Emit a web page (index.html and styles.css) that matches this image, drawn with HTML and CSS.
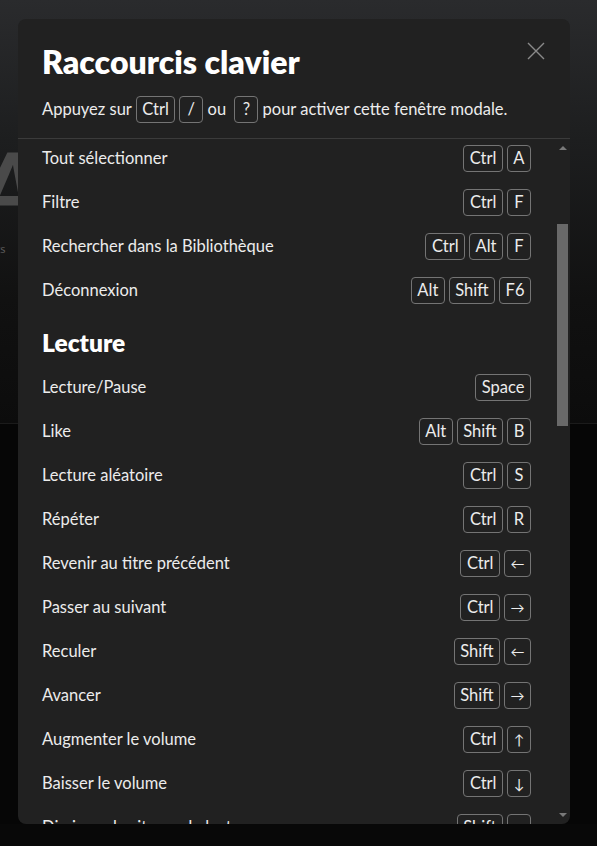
FILE: index.html
```html
<!DOCTYPE html>
<html lang="fr">
<head>
    <meta charset="UTF-8">
    <meta name="viewport" content="width=device-width, initial-scale=1.0">
    <title>Raccourcis clavier</title>
    <link rel="stylesheet" href="styles.css">
</head>
<body>
    <div class="page">
        <div class="pageHeader">
            <div class="bigTitle">Albums</div>
            <div class="subLine">Playlists</div>
        </div>
        <div class="pageBody"></div>
    </div>

    <div class="modal" role="dialog">
        <div class="modalHeader">
            <h1>Raccourcis clavier</h1>
            <p class="hint">Appuyez sur <kbd>Ctrl</kbd><kbd>/</kbd> ou <kbd>?</kbd> pour activer cette fenêtre modale.</p>
            <button class="close" aria-label="Fermer">
                <svg width="18" height="18" viewBox="0 0 18 18"><path d="M1 1 L17 17 M17 1 L1 17" stroke="#8a8a8a" stroke-width="1.4" fill="none"/></svg>
            </button>
        </div>
        <div class="modalBody">
            <div class="scrollView" id="scrollView">
                <h2>Basique</h2>
                <div class="row"><span>Créer une nouvelle playlist</span><span class="keys"><kbd>Ctrl</kbd><kbd>N</kbd></span></div>
                <div class="row"><span>Créer un nouveau dossier</span><span class="keys"><kbd>Ctrl</kbd><kbd>Shift</kbd><kbd>N</kbd></span></div>
                <div class="row"><span>Ouvrir le menu contextuel</span><span class="keys"><kbd>Alt</kbd><kbd>J</kbd></span></div>
                <div class="row"><span>Ouvrir la recherche rapide</span><span class="keys"><kbd>Ctrl</kbd><kbd>K</kbd></span></div>
                <div class="row"><span>Tout sélectionner</span><span class="keys"><kbd>Ctrl</kbd><kbd>A</kbd></span></div>
                <div class="row"><span>Filtre</span><span class="keys"><kbd>Ctrl</kbd><kbd>F</kbd></span></div>
                <div class="row"><span>Rechercher dans la Bibliothèque</span><span class="keys"><kbd>Ctrl</kbd><kbd>Alt</kbd><kbd>F</kbd></span></div>
                <div class="row"><span>Déconnexion</span><span class="keys"><kbd>Alt</kbd><kbd>Shift</kbd><kbd>F6</kbd></span></div>

                <h2>Lecture</h2>
                <div class="row"><span>Lecture/Pause</span><span class="keys"><kbd>Space</kbd></span></div>
                <div class="row"><span>Like</span><span class="keys"><kbd>Alt</kbd><kbd>Shift</kbd><kbd>B</kbd></span></div>
                <div class="row"><span>Lecture aléatoire</span><span class="keys"><kbd>Ctrl</kbd><kbd>S</kbd></span></div>
                <div class="row"><span>Répéter</span><span class="keys"><kbd>Ctrl</kbd><kbd>R</kbd></span></div>
                <div class="row"><span>Revenir au titre précédent</span><span class="keys"><kbd>Ctrl</kbd><kbd class="arrowKey">←</kbd></span></div>
                <div class="row"><span>Passer au suivant</span><span class="keys"><kbd>Ctrl</kbd><kbd class="arrowKey">→</kbd></span></div>
                <div class="row"><span>Reculer</span><span class="keys"><kbd>Shift</kbd><kbd class="arrowKey">←</kbd></span></div>
                <div class="row"><span>Avancer</span><span class="keys"><kbd>Shift</kbd><kbd class="arrowKey">→</kbd></span></div>
                <div class="row"><span>Augmenter le volume</span><span class="keys"><kbd>Ctrl</kbd><kbd class="arrowKey">↑</kbd></span></div>
                <div class="row"><span>Baisser le volume</span><span class="keys"><kbd>Ctrl</kbd><kbd class="arrowKey">↓</kbd></span></div>
                <div class="row"><span>Diminuer la vitesse de lecture</span><span class="keys"><kbd>Shift</kbd><kbd>,</kbd></span></div>
                <div class="row"><span>Augmenter la vitesse de lecture</span><span class="keys"><kbd>Shift</kbd><kbd>.</kbd></span></div>

                <h2>Navigation</h2>
                <div class="row"><span>Accueil</span><span class="keys"><kbd>Alt</kbd><kbd>Shift</kbd><kbd>H</kbd></span></div>
                <div class="row"><span>Retour</span><span class="keys"><kbd>Alt</kbd><kbd class="arrowKey">←</kbd></span></div>
                <div class="row"><span>Suivant</span><span class="keys"><kbd>Alt</kbd><kbd class="arrowKey">→</kbd></span></div>
                <div class="row"><span>Rechercher</span><span class="keys"><kbd>Ctrl</kbd><kbd>Shift</kbd><kbd>L</kbd></span></div>
                <div class="row"><span>Titres likés</span><span class="keys"><kbd>Alt</kbd><kbd>Shift</kbd><kbd>S</kbd></span></div>
                <div class="row"><span>En cours de lecture</span><span class="keys"><kbd>Alt</kbd><kbd>Shift</kbd><kbd>J</kbd></span></div>
                <div class="row"><span>Préférences</span><span class="keys"><kbd>Ctrl</kbd><kbd>,</kbd></span></div>

                <h2>Mise en page</h2>
                <div class="row"><span>Afficher/masquer la Bibliothèque</span><span class="keys"><kbd>Alt</kbd><kbd>Shift</kbd><kbd>L</kbd></span></div>
                <div class="row"><span>Afficher/masquer la file d'attente</span><span class="keys"><kbd>Alt</kbd><kbd>Shift</kbd><kbd>Q</kbd></span></div>
                <div class="row"><span>Afficher/masquer les paroles</span><span class="keys"><kbd>Alt</kbd><kbd>Shift</kbd><kbd>U</kbd></span></div>
                <div class="row"><span>Plein écran</span><span class="keys"><kbd>F11</kbd></span></div>
            </div>
            <div class="scrollBar">
                <span class="arrow up"></span>
                <div class="track"><div class="thumb"></div></div>
                <span class="arrow down"></span>
            </div>
        </div>
    </div>
    <script>
        document.getElementById('scrollView').scrollTop = 232;
    </script>
</body>
</html>
```

FILE: styles.css
```css
body{
    margin: 0;
    padding: 0;
    background-color: #080808;
    font-family: Lato, "Noto Sans", sans-serif;
    overflow: hidden;
}
.page{
    height: 825px;
    overflow: hidden;
}
.pageHeader{
    height: 424px;
    background: linear-gradient(#2a2b2d 0, #1d1e1f 140px, #111111 300px, #0c0c0c 424px);
    border-bottom: 1px solid #1b1b1b;
    padding-top: 140px;
    box-sizing: border-box;
}
.bigTitle{
    font-size: 96px;
    font-weight: 900;
    font-style: italic;
    color: #4a4a4a;
    margin-left: -22px;
    line-height: 90px;
}
.subLine{
    font-size: 12px;
    color: #5a5a5a;
    margin-left: -37px;
    margin-top: 11px;
}
.pageBody{
    height: 400px;
    background-color: #060606;
}
.modal{
    position: absolute;
    left: 18px;
    top: 19px;
    width: 552px;
    height: 805px;
    background-color: #212121;
    border-radius: 8px;
    display: flex;
    flex-direction: column;
    overflow: hidden;
    color: #ececec;
}
.modalHeader{
    position: relative;
    box-sizing: border-box;
    padding: 23px 24px 0;
    height: 120px;
    border-bottom: 1px solid #3b3b3b;
    flex-shrink: 0;
}
.modalHeader h1{
    margin: 0;
    font-size: 32px;
    line-height: 40px;
    font-weight: 800;
    color: #ffffff;
}
.hint{
    margin: 13px 0 0;
    font-size: 16.5px;
    line-height: 28px;
    display: flex;
    align-items: center;
    white-space: pre;
}
.hint kbd + kbd{
    margin-left: 4px;
}
.close{
    position: absolute;
    right: 24px;
    top: 23px;
    background: none;
    border: none;
    padding: 0;
    width: 20px;
    height: 20px;
}
kbd{
    display: inline-flex;
    align-items: center;
    justify-content: center;
    box-sizing: border-box;
    height: 27px;
    min-width: 24px;
    padding: 0 5.5px;
    border: 1px solid #747474;
    border-radius: 4px;
    font-family: Lato, "Noto Sans", sans-serif;
    font-size: 16.5px;
    color: #ececec;
}
kbd.arrowKey{
    font-size: 14px;
}
.modalBody{
    flex: 1;
    display: flex;
    min-height: 0;
}
.scrollView{
    flex: 1;
    overflow: hidden;
    padding: 0 24px;
}
.scrollView h2{
    margin: 16px 0 7px;
    font-size: 24.5px;
    line-height: 30px;
    font-weight: 800;
    color: #ffffff;
}
.row{
    height: 44px;
    display: flex;
    align-items: center;
    justify-content: space-between;
    font-size: 16.5px;
}
.keys{
    display: flex;
    gap: 4px;
}
.scrollBar{
    width: 15px;
    display: flex;
    flex-direction: column;
    align-items: center;
}
.arrow{
    width: 0;
    height: 0;
    border-left: 4px solid transparent;
    border-right: 4px solid transparent;
    margin: 7px 0;
}
.arrow.up{
    border-bottom: 4px solid #7a7a7a;
}
.arrow.down{
    border-top: 4px solid #7a7a7a;
}
.track{
    flex: 1;
    width: 11px;
    padding-top: 67px;
}
.thumb{
    height: 202px;
    background-color: #696969;
}
```
